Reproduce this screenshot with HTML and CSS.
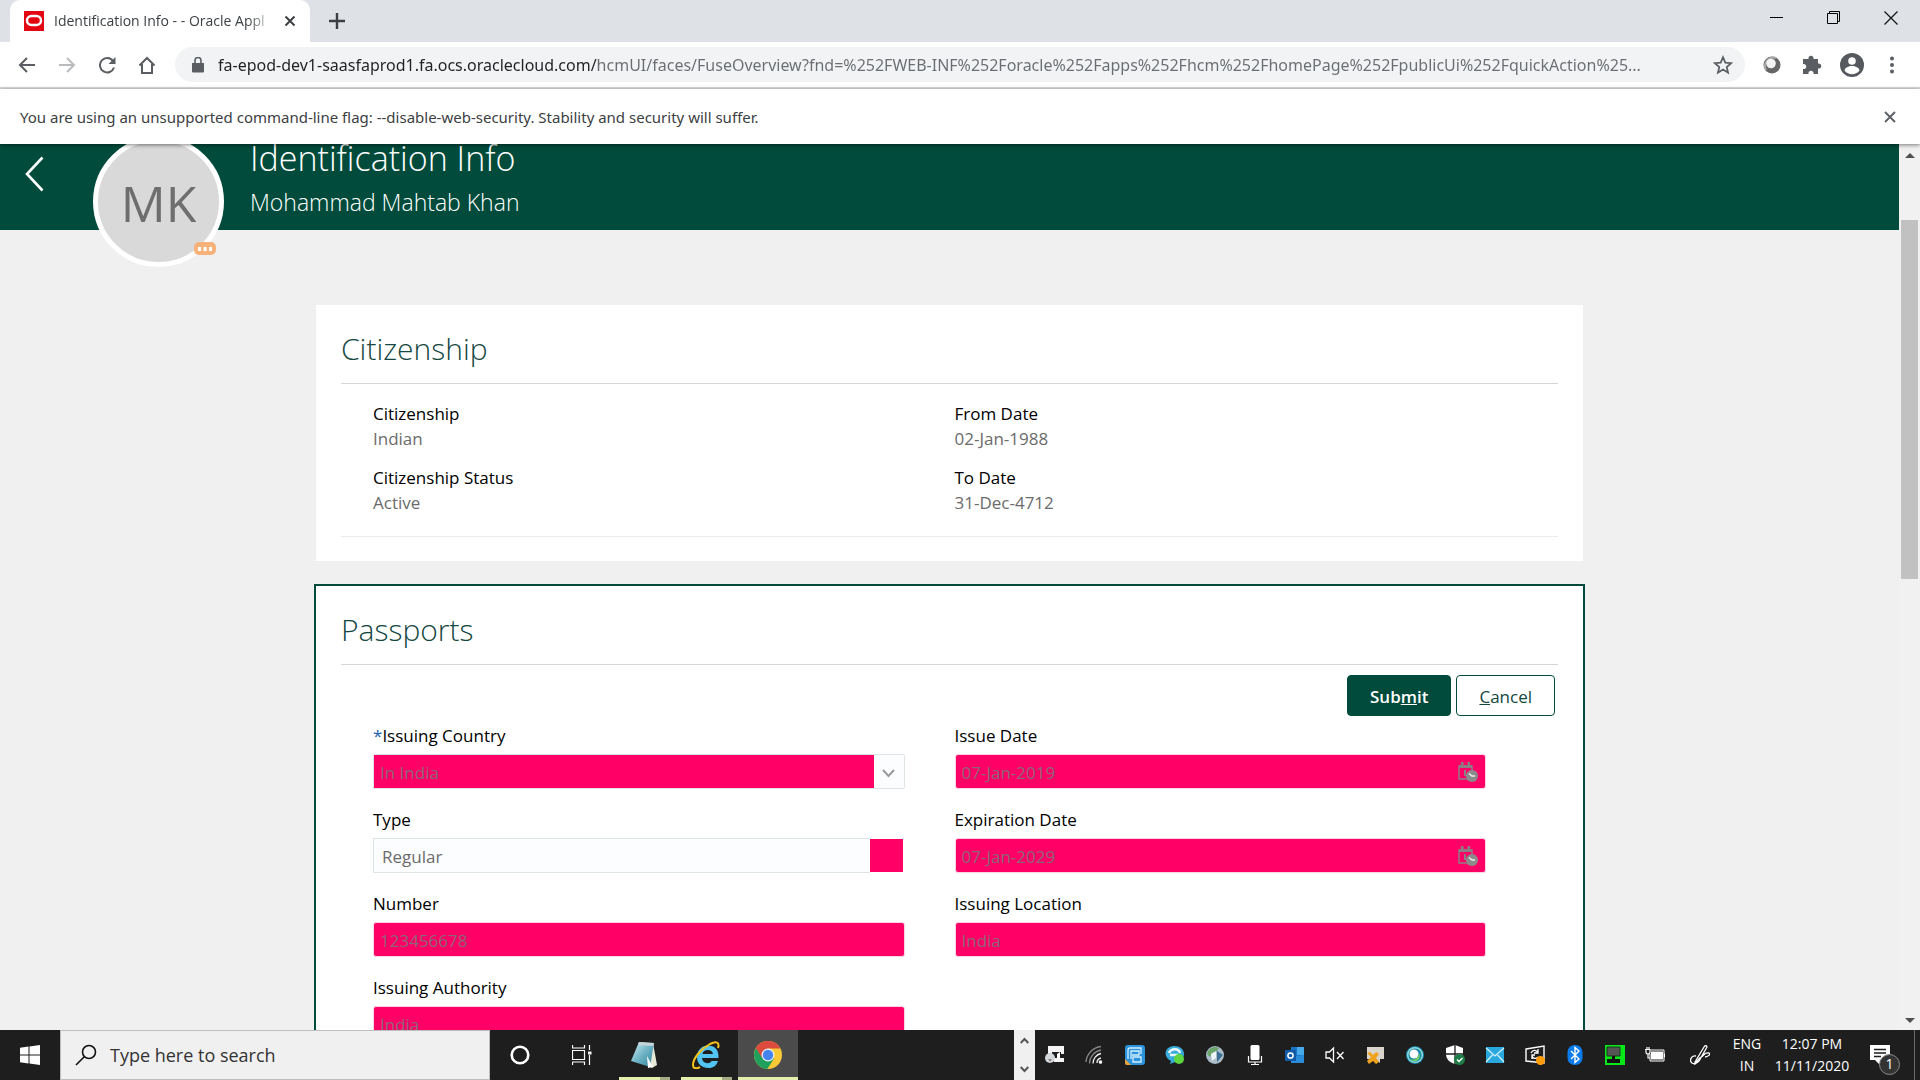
FILE: index.html
```html
<!DOCTYPE html>
<html lang="en">
<head>
<meta charset="utf-8">
<title>Identification Info - - Oracle Applications</title>
<link rel="stylesheet" href="styles.css">
</head>
<body>
<div class="tabstrip">
  <div class="tab">
    <svg class="favicon" width="20" height="20" viewBox="0 0 20 20"><path fill="#e30613" d="M0 0h20v20H0z"/><rect x="3" y="5" width="14" height="9" rx="4.500" fill="none" stroke="#fff" stroke-width="2.500"/></svg>
    <span class="tab-title">Identification Info - - Oracle Appl</span>
    <button class="bare" aria-label="Close tab"><svg width="12" height="12" viewBox="0 0 12 12"><path d="M1.500 1.500l9 9m0-9l-9 9" stroke="#3c4043" stroke-width="2"/></svg></button>
  </div>
  <button class="bare new-tab" aria-label="New tab"><svg width="16" height="16" viewBox="0 0 16 16"><path d="M8 0v16M0 8h16" stroke="#3c4043" stroke-width="2.400"/></svg></button>
  <div class="window-controls">
    <button class="bare" aria-label="Minimize"><svg width="14" height="14" viewBox="0 0 14 14"><path d="M0 6.500h13" stroke="#000"/></svg></button>
    <button class="bare" aria-label="Restore"><svg width="14" height="14" viewBox="0 0 14 14"><path d="M.5 2.500h10v10H.5zM2.500 2.500v-2h10v10h-2" fill="none" stroke="#000"/></svg></button>
    <button class="bare" aria-label="Close"><svg width="14" height="14" viewBox="0 0 14 14"><path d="M.5.5l13 13m0-13l-13 13" stroke="#111" stroke-width="1.200"/></svg></button>
  </div>
</div>

<div class="toolbar">
  <div class="nav">
    <button class="bare" aria-label="Back"><svg width="18" height="18" viewBox="0 0 18 18"><path d="M17 9H2m7-7L2 9l7 7" fill="none" stroke="#5a5d61" stroke-width="2"/></svg></button>
    <button class="bare" aria-label="Forward"><svg width="18" height="18" viewBox="0 0 18 18"><path d="M1 9h15M9 2l7 7-7 7" fill="none" stroke="#b9bbbd" stroke-width="2"/></svg></button>
    <button class="bare" aria-label="Reload"><svg width="18" height="18" viewBox="0 0 18 18"><path d="M15 5A7.200 7.200 0 1 0 16 11.500" fill="none" stroke="#5a5d61" stroke-width="2"/><path d="M17.500 1v7h-7z" fill="#5a5d61"/></svg></button>
    <button class="bare" aria-label="Home"><svg width="18" height="18" viewBox="0 0 18 18"><path d="M1.500 9.500L9 2l7.500 7.500M4 8v9h10V8" fill="none" stroke="#5a5d61" stroke-width="2"/></svg></button>
  </div>
  <div class="omnibox">
    <svg width="12" height="16" viewBox="0 0 12 16"><path d="M0 6h12v8.500a1 1 0 0 1-1 1H1a1 1 0 0 1-1-1z" fill="#5a5d61"/><path d="M3 6V3.500a3 3 0 0 1 6 0V6" fill="none" stroke="#5a5d61" stroke-width="1.600"/></svg>
    <input class="url" aria-label="Address" value="fa-epod-dev1-saasfaprod1.fa.ocs.oraclecloud.com/hcmUI/faces/FuseOverview?fnd=%252FWEB-INF%252Foracle%252Fapps%252Fhcm%252FhomePage%252FpublicUi%252FquickAction%25...">
    <button class="bare" aria-label="Bookmark"><svg width="20" height="20" viewBox="0 0 20 20"><path d="M10 2.200l2.300 5.400 5.900.5-4.500 3.900 1.400 5.700-5.100-3.100-5.100 3.100 1.400-5.700L1.800 8.100l5.900-.5z" fill="none" stroke="#5a5d61" stroke-width="1.700"/></svg></button>
  </div>
  <div class="extensions">
    <button class="bare" aria-label="Extension"><svg width="18" height="18" viewBox="0 0 18 18"><circle cx="9" cy="9" r="8.500" fill="#666"/><path d="M3 14A8.500 8.500 0 0 1 13 2" fill="none" stroke="#aaa" stroke-width="2"/><circle cx="8" cy="7.500" r="4.800" fill="#f2f2f2"/></svg></button>
    <button class="bare" aria-label="Extensions"><svg width="20" height="20" viewBox="0 0 20 20"><path d="M1 4h5.500a2.600 2.600 0 1 1 5 0H16v4.500a2.600 2.600 0 1 1 0 5V19h-4.500a2.600 2.600 0 1 0-5 0H1v-5a2.600 2.600 0 1 0 0-5z" fill="#5a5d61"/></svg></button>
    <button class="bare" aria-label="Profile"><svg width="24" height="24" viewBox="0 0 24 24"><circle cx="12" cy="12" r="12" fill="#56595e"/><circle cx="12" cy="8" r="3.800" fill="#fff"/><path d="M4.500 17.500c1-6 14-6 15 0-4 5-11 5-15 0z" fill="#fff"/></svg></button>
    <button class="bare" aria-label="Menu"><svg width="6" height="18" viewBox="0 0 6 18" fill="#5a5d61"><circle cx="3" cy="2.500" r="2"/><circle cx="3" cy="9" r="2"/><circle cx="3" cy="15.500" r="2"/></svg></button>
  </div>
</div>

<div class="infobar">
  <span>You are using an unsupported command-line flag: --disable-web-security. Stability and security will suffer.</span>
  <button class="bare" aria-label="Dismiss"><svg width="12" height="12" viewBox="0 0 12 12"><path d="M1 1l10 10m0-10L1 11" stroke="#5f6368" stroke-width="2"/></svg></button>
</div>

<div class="viewport">
  <main class="page">
    <header class="hero">
      <button class="bare back" aria-label="Go back"><svg width="20" height="36" viewBox="0 0 20 36"><path d="M17.500 1.500L2 18l15.500 16.500" fill="none" stroke="#fff" stroke-width="2.600"/></svg></button>
      <div class="avatar">MK<span class="avatar-badge"><svg width="14" height="4" viewBox="0 0 14 4" fill="#fff"><path d="M0 0h3v4H0zM5.500 0h3v4h-3zM11 0h3v4h-3z"/></svg></span></div>
      <div class="hero-text">
        <h1>Identification Info</h1>
        <p>Mohammad Mahtab Khan</p>
      </div>
    </header>

    <div class="cards">
      <section class="card">
        <h2>Citizenship</h2>
        <dl class="facts">
          <div><dt>Citizenship</dt><dd>Indian</dd></div>
          <div><dt>From Date</dt><dd>02-Jan-1988</dd></div>
          <div><dt>Citizenship Status</dt><dd>Active</dd></div>
          <div><dt>To Date</dt><dd>31-Dec-4712</dd></div>
        </dl>
      </section>

      <section class="card card-active">
        <h2>Passports</h2>
        <form>
          <div class="actions">
            <button class="btn btn-primary" type="button"><span>Sub<u>m</u>it</span></button>
            <button class="btn" type="button"><span><u>C</u>ancel</span></button>
          </div>
          <div class="fields">
            <div class="field">
              <label for="country"><span class="required">*</span>Issuing Country</label>
              <div class="control control-lov"><input id="country" value="In India"><button class="bare" type="button" aria-label="Show list"><svg width="13" height="9" viewBox="0 0 13 9"><path d="M1 1l5.500 6L12 1" fill="none" stroke="#9a9a9a" stroke-width="2"/></svg></button></div>
            </div>
            <div class="field">
              <label for="issued">Issue Date</label>
              <div class="control control-pink"><input id="issued" value="07-Jan-2019"><button class="bare" type="button" aria-label="Select date"><svg width="20" height="20" viewBox="0 0 20 20"><path d="M1 4h13v13H1z" fill="none" stroke="#8d7d85" stroke-width="1.500"/><path d="M1 3h13v3H1zM3 0h2.500v4H3zM9.500 0H12v4H9.500zM6 8h2v6H6z" fill="#8d7d85"/><circle cx="14" cy="14" r="6" fill="#8b8b8b"/><path d="M11 11.500l3 2.500h3" fill="none" stroke="#eee" stroke-width="1.600"/></svg></button></div>
            </div>
            <div class="field">
              <label for="type">Type</label>
              <div class="control control-select"><select id="type"><option>Regular</option></select><span class="swatch"></span></div>
            </div>
            <div class="field">
              <label for="expires">Expiration Date</label>
              <div class="control control-pink"><input id="expires" value="07-Jan-2029"><button class="bare" type="button" aria-label="Select date"><svg width="20" height="20" viewBox="0 0 20 20"><path d="M1 4h13v13H1z" fill="none" stroke="#8d7d85" stroke-width="1.500"/><path d="M1 3h13v3H1zM3 0h2.500v4H3zM9.500 0H12v4H9.500zM6 8h2v6H6z" fill="#8d7d85"/><circle cx="14" cy="14" r="6" fill="#8b8b8b"/><path d="M11 11.500l3 2.500h3" fill="none" stroke="#eee" stroke-width="1.600"/></svg></button></div>
            </div>
            <div class="field">
              <label for="number">Number</label>
              <div class="control control-pink"><input id="number" value="123456678"></div>
            </div>
            <div class="field">
              <label for="location">Issuing Location</label>
              <div class="control control-pink"><input id="location" value="India"></div>
            </div>
            <div class="field">
              <label for="authority">Issuing Authority</label>
              <div class="control control-pink"><input id="authority" value="India"></div>
            </div>
          </div>
        </form>
      </section>
    </div>
  </main>
  <div class="scrollbar">
    <svg width="10" height="5" viewBox="0 0 10 5"><path d="M0 5l5-5 5 5z" fill="#505050"/></svg>
    <div class="track"><div class="thumb"></div></div>
    <svg width="10" height="5" viewBox="0 0 10 5"><path d="M0 0l5 5 5-5z" fill="#505050"/></svg>
  </div>
</div>

<footer class="taskbar">
  <button class="bare start" aria-label="Start"><svg width="20" height="20" viewBox="0 0 20 20" fill="#fff"><path d="M0 2.800l8.500-1.200v8H0zM9.500 1.400L20 0v9.600H9.500zM0 10.400h8.500v8L0 17.200zM9.500 10.400H20V20L9.500 18.600z"/></svg></button>
  <label class="search">
    <svg width="22" height="22" viewBox="0 0 22 22"><circle cx="14" cy="8" r="6.500" fill="none" stroke="#111" stroke-width="1.600"/><path d="M9.500 12.500L1 21" stroke="#111" stroke-width="1.600"/></svg>
    <input placeholder="Type here to search" aria-label="Search">
  </label>
  <div class="apps">
    <button class="bare app" aria-label="Cortana"><svg width="20" height="20" viewBox="0 0 20 20"><circle cx="10" cy="10" r="8.300" fill="none" stroke="#fff" stroke-width="2.600"/></svg></button>
    <button class="bare app" aria-label="Task view"><svg width="20" height="20" viewBox="0 0 20 20"><path d="M.5 5.500h12v9H.5zM.5 0v3h12V0M.5 20v-3h12v3M17.500 0v5M17.500 10v10" fill="none" stroke="#fff" stroke-width="1.200"/><path d="M16 6.500h3.500v3H16z" fill="#fff"/></svg></button>
    <button class="bare app stacked" aria-label="Notepad"><svg width="28" height="28" viewBox="0 0 28 28"><defs><linearGradient id="pad" x1="0" x2="1" y1="0" y2="1"><stop offset="0" stop-color="#d8f0f4"/><stop offset=".5" stop-color="#6fb4c6"/><stop offset="1" stop-color="#2f7f98"/></linearGradient></defs><path d="M23 2l4 22-5 3-4-3z" fill="#e6e8d8"/><path d="M9 1l15 1-4 24L1 20z" fill="url(#pad)"/><path d="M9 1l15 1-.5 3L8 4z" fill="#c8d4d8"/><path d="M17 15l6 11-5 1z" fill="#fff"/></svg></button>
    <button class="bare app stacked" aria-label="Internet Explorer"><svg width="28" height="28" viewBox="0 0 28 28"><path d="M10 17h16.500C27 8 22 4.500 16 4.500S5 9 5 16s5 11 11.500 11c5 0 8-2.500 9.500-7h-6.500C18 23.500 10.500 23 10 17zM10.500 13c.5-5.500 10-5.500 10.500 0z" fill="#51c4f2" fill-rule="evenodd"/><path d="M26 7c2-6-2-7-8-4C9 8 1 17 1 24c0 4 4 4 7 2" fill="none" stroke="#f6c21c" stroke-width="2"/></svg></button>
    <button class="bare app current" aria-label="Chrome"><svg width="28" height="28" viewBox="0 0 28 28"><circle cx="14" cy="14" r="14" fill="#fbc935"/><path d="M1.900 7A14 14 0 0 0 13.300 28L20 17.500 14 14z" fill="#1fa05d"/><path d="M1.900 7A14 14 0 0 1 26.500 7.500H14L8 17z" fill="#dd4b3e"/><circle cx="14" cy="14" r="6.500" fill="#eef1f5"/><circle cx="14" cy="14" r="5.200" fill="#4584ee"/></svg></button>
  </div>
  <div class="band-scroll">
    <svg width="9" height="7" viewBox="0 0 9 7"><path d="M.7 6l3.800-4L8.300 6" fill="none" stroke="#555" stroke-width="2"/></svg>
    <svg width="9" height="7" viewBox="0 0 9 7"><path d="M.7 1l3.800 4L8.300 1" fill="none" stroke="#555" stroke-width="2"/></svg>
  </div>
  <div class="tray">
    <svg width="20" height="20" viewBox="0 0 20 20"><path d="M3 1h16v6H3zM9 13h10v4H9z" fill="#f4f4f4"/><path d="M3 7h4v3H3zM16 7h3v2h-3z" fill="#f4f4f4"/><path d="M12 9l3-2v6h-3z" fill="#fff"/><circle cx="5" cy="13" r="5" fill="#d5d8da"/><path d="M3 14l2 3 2-3z" fill="#888"/></svg>
    <svg width="20" height="20" viewBox="0 0 20 20" fill="none" stroke="#eee" stroke-width="1.300"><path d="M12 18a5 5 0 0 1 4-5M8 18.500a10 10 0 0 1 8-10"/><path d="M4.500 18.500A14 14 0 0 1 16 5M1 17A17 17 0 0 1 16 1.500" stroke="#888"/><circle cx="15.500" cy="17" r="1.200" fill="#fff"/></svg>
    <svg width="20" height="20" viewBox="0 0 20 20"><rect width="20" height="20" rx="3" fill="#2b93dc"/><path d="M3 14V5q0-2 2-2h11v6M6 14V6h8v4H7M8 17h8v-5H8z" fill="none" stroke="#d4efff" stroke-width="1.300"/><path d="M0 14l6 6H2q-2 0-2-2z" fill="#e8a33a"/></svg>
    <svg width="20" height="20" viewBox="0 0 20 20"><path d="M9 1c6 0 10 3 10 8s-4 8-9 8l-5 2 1-3C-3 12 0 1 9 1z" fill="#38acd8"/><path d="M4 8c2-5 10-5 11 0M5 10h8" fill="none" stroke="#e9f8ff" stroke-width="2.500"/><circle cx="14" cy="14" r="5" fill="#5ed640"/></svg>
    <svg width="20" height="20" viewBox="0 0 20 20"><circle cx="10" cy="10" r="9" fill="#a9bcc8"/><path d="M2 9c2-7 8-8 12-6l-3 4-4 1-2 4z" fill="#6ba368"/><path d="M12 6l6 4-6 7z" fill="#3d6f94"/><path d="M6 9l5-3v7l-4 3z" fill="#eef4f7"/></svg>
    <svg width="20" height="20" viewBox="0 0 20 20"><rect x="5.500" y="0" width="9" height="15" rx="1.500" fill="#fff"/><path d="M3.500 11v6h13v-6M10 17v3M6 19.500h8" fill="none" stroke="#fff" stroke-width="1.200"/></svg>
    <svg width="20" height="20" viewBox="0 0 20 20"><path d="M6 2h13v16H6z" fill="#1a74c4"/><path d="M12 2h7v8h-7z" fill="#45a9ea"/><path d="M6 12l13-2v8H6z" fill="#2a8bd8"/><path d="M0 5h11v11H0z" fill="#0f5ba7"/><circle cx="5.500" cy="10.500" r="2.600" fill="none" stroke="#fff" stroke-width="1.500"/></svg>
    <svg width="20" height="20" viewBox="0 0 20 20"><path d="M1 7h3.500l4-4v14l-4-4H1zM12 7l6.500 7m0-7L12 14" fill="none" stroke="#fff" stroke-width="1.300"/></svg>
    <svg width="20" height="20" viewBox="0 0 20 20"><path d="M2 2h17v12h-4v4l-4-4H2z" fill="#d9d4cc"/><path d="M2 8l3-1 3 3 3-3 3 2-3 4 3 4-3 2-3-3-4 3-2-3 4-4z" fill="#efa31d"/></svg>
    <svg width="20" height="20" viewBox="0 0 20 20"><circle cx="10" cy="10" r="9" fill="#168ba5"/><circle cx="10" cy="10" r="7.300" fill="none" stroke="#8fd3de" stroke-width="1.500"/><circle cx="9" cy="9" r="4.500" fill="#fff"/><path d="M5 14c5 2 9-1 9-6 3 6-4 11-9 6z" fill="#7ed957"/></svg>
    <svg width="20" height="20" viewBox="0 0 20 20"><path d="M10 0l8 3v6c0 6-5 9-8 10-4-1-9-4-9-10V3z" fill="#fff"/><path d="M10 0v19M1 9h17" stroke="#1e1e1e" stroke-width="1.300"/><circle cx="14.500" cy="14.500" r="5.500" fill="#1e7d47"/><path d="M12 14.500l2 2 3.500-3.500" fill="none" stroke="#fff" stroke-width="1.400"/></svg>
    <svg width="20" height="20" viewBox="0 0 20 20"><path d="M1 2h18v16H1z" fill="#28a8dc"/><path d="M1 3l9 8 9-8M1 17l6.500-7M19 17l-6.500-7" fill="none" stroke="#d5f1fc" stroke-width="1.200"/></svg>
    <svg width="20" height="20" viewBox="0 0 20 20"><path d="M1 4l18-3v17L1 16z" fill="none" stroke="#fff" stroke-width="1.400"/><path d="M6 8c2-4 6-3 7 0M13 4v4H9M7 14v-4h3M7 11c1 3 4 3 6 1" fill="none" stroke="#fff" stroke-width="1.300"/><circle cx="15.500" cy="15.500" r="4.500" fill="#ff9d0a"/></svg>
    <svg width="20" height="20" viewBox="0 0 20 20"><rect x="2.500" width="15" height="20" rx="7" fill="#0a7be8"/><path d="M6 6l8 8-4 3.500v-15L14 6l-8 8" fill="none" stroke="#fff" stroke-width="1.400"/></svg>
    <svg width="20" height="20" viewBox="0 0 20 20"><path d="M0 0h20v20H0z" fill="#07e818"/><path d="M2 2h13v9H2z" fill="#555"/><path d="M2 2h13v9H2z" fill="none" stroke="#173d1b"/><path d="M7 11h3v3h5v4H2v-4h5z" fill="#111"/></svg>
    <svg width="20" height="20" viewBox="0 0 20 20"><path d="M6 6.500h12v8H6z" fill="#fff"/><path d="M5 5h14v11H5zM19.500 8.500v4" fill="none" stroke="#fff" stroke-width="1"/><path d="M0 4h6v5H4v4H2V9H0z" fill="#1e1e1e"/><path d="M0 4.500h5M1 4v3q0 2 2 2t2-2V4M3 9v4h2M2 4V2M4 4V2" fill="none" stroke="#fff" stroke-width="1.200"/></svg>
    <svg class="pen" width="20" height="20" viewBox="0 0 20 20"><path d="M5 17L14 2q2-3 3 0L9 16l-4 3zM6 11c-5-1-7 5-4 7 4 3 6-5 9-6s3-5 8-4c2 1-1 4-4 4" fill="none" stroke="#fff" stroke-width="1.300"/></svg>
    <div class="tray-text lang"><span>ENG</span><span>IN</span></div>
    <div class="tray-text clock"><span>12:07 PM</span><span>11/11/2020</span></div>
    <button class="bare notify" aria-label="Notifications"><svg width="20" height="20" viewBox="0 0 20 20"><path d="M0 0h20v15H10v5l-5-5H0z" fill="#fff"/><path d="M4 4.500h12M4 8h12M4 11.500h7" stroke="#1e1e1e" stroke-width="1.300"/></svg><span class="count">1</span></button>
    <span class="peek"></span>
  </div>
</footer>
</body>
</html>
```

FILE: styles.css
```css
* { box-sizing: border-box; }

body {
  margin: 0;
  height: 100vh;
  display: flex;
  flex-direction: column;
  overflow: hidden;
  font-family: "Open Sans", "Noto Sans", sans-serif;
  font-size: 17px;
  line-height: 24px;
  color: #000;
  background: #fff;
}

h1, h2, p, dl, dd { margin: 0; }
input, select, button { font: inherit; color: inherit; }
svg { display: block; flex: none; }

.bare {
  display: flex;
  align-items: center;
  justify-content: center;
  flex: none;
  padding: 0;
  border: 0;
  background: none;
}

/* Browser chrome */
.tabstrip {
  display: flex;
  align-items: center;
  flex: none;
  height: 42px;
  padding-left: 10px;
  background: #dee1e6;
}
.tab {
  display: flex;
  align-items: center;
  align-self: stretch;
  width: 300px;
  padding: 0 14px;
  gap: 10px;
  border-radius: 10px 10px 0 0;
  background: #fff;
  font-size: 14px;
  color: #3c4043;
}
.tab-title {
  flex: 1;
  overflow: hidden;
  white-space: nowrap;
  -webkit-mask-image: linear-gradient(90deg, #000 88%, transparent);
  mask-image: linear-gradient(90deg, #000 88%, transparent);
}
.new-tab { margin-left: 19px; }
.window-controls { display: flex; gap: 43px; margin-left: auto; padding-right: 22px; padding-bottom: 6px; }

.toolbar {
  display: flex;
  align-items: center;
  flex: none;
  height: 47px;
  padding: 0 16px 0 18px;
  border-bottom: 2px solid #d9dadc;
}
.nav { display: flex; gap: 22px; margin-right: 19px; }
.omnibox {
  display: flex;
  align-items: center;
  flex: 1;
  height: 35px;
  padding: 0 12px 0 17px;
  gap: 14px;
  border-radius: 18px;
  background: #f1f3f4;
}
.url {
  flex: 1;
  min-width: 0;
  padding: 0;
  border: 0;
  outline: 0;
  font-family: "Noto Sans", sans-serif;
  font-size: 16px;
  background: linear-gradient(90deg, #202124 380px, #6a6d71 380px);
  -webkit-background-clip: text;
  background-clip: text;
  color: transparent;
}
.extensions { display: flex; align-items: center; gap: 16px; margin-left: 15px; }
.extensions .bare { width: 24px; }

.infobar {
  display: flex;
  align-items: center;
  justify-content: space-between;
  flex: none;
  height: 55px;
  padding: 0 24px 0 20px;
  font-family: "Noto Sans", sans-serif;
  font-size: 15px;
  color: #3c4043;
  box-shadow: 0 1px 4px rgba(0, 0, 0, .5);
  z-index: 1;
}

/* Page */
.viewport { display: flex; flex: 1; min-height: 0; }
.page { flex: 1; overflow: hidden; background: #f0f0f0; }

.hero {
  display: flex;
  align-items: flex-start;
  height: 86px;
  background: #004b3b;
  color: #fff;
}
.back { margin: 12px 0 0 25px; }
.avatar {
  position: relative;
  flex: none;
  width: 131px;
  height: 131px;
  margin: -8px 26px 0 48px;
  border: 5px solid #fff;
  border-radius: 50%;
  background: #d9d9d9;
  color: #6e6e6e;
  font-size: 50px;
  line-height: 124px;
  text-align: center;
}
.avatar-badge {
  position: absolute;
  right: 3px;
  bottom: 7px;
  width: 22px;
  height: 13px;
  display: flex;
  align-items: center;
  justify-content: center;
  border-radius: 5px;
  background: #f7b27a;
}
.hero h1 { font-size: 34px; font-weight: 300; line-height: 28px; }
.hero p { font-size: 23px; font-weight: 300; line-height: 32px; margin-top: 14px; }

.cards {
  display: flex;
  flex-direction: column;
  gap: 21px;
  max-width: 1271px;
  margin: 0 auto;
  padding-top: 73px;
}
.card {
  padding: 22px 25px 24px;
  border: 2px solid transparent;
  background: #fff padding-box;
}
.card-active { border-color: #004b3b; }
.card h2 {
  padding-bottom: 12px;
  border-bottom: 1px solid #d6d6d6;
  font-size: 30px;
  font-weight: 300;
  line-height: 44px;
  color: #14473f;
}
.facts, .fields {
  display: grid;
  grid-template-columns: 1fr 1fr;
  column-gap: 50px;
  padding: 0 72px 0 32px;
}
.facts {
  padding-top: 18px;
  padding-bottom: 20px;
  row-gap: 14px;
  border-bottom: 1px solid #ececec;
}
dt, label { font-weight: 500; }
.facts dd { color: #6b6b6b; line-height: 26px; }

.actions { display: flex; justify-content: flex-end; gap: 5px; padding: 10px 3px 8px 0; }
.btn {
  height: 41px;
  padding: 2px 22px 0;
  border: 1px solid #004b3b;
  border-radius: 4px;
  background: #fff;
  color: #14473f;
}
.btn-primary { background: #004b3b; color: #fff; font-weight: 600; }

.field { height: 84px; }
.field label { display: block; line-height: 24px; margin-bottom: 6px; }
.required { color: #1d5fa8; }
.control { display: flex; height: 35px; }
.control input, .control select {
  flex: 1;
  min-width: 0;
  padding: 2px 6px 0;
  border: 0;
  outline: 0;
  background: none;
  color: #8c6677;
}
.control-pink { border: 1px solid #ffd3e4; border-radius: 3px; background: #ff0066; }
.control-pink .bare { padding-right: 7px; }
.control-lov { border: 1px solid #dfe4e7; border-radius: 2px; background: #fcfdfe; }
.control-lov input { background: #ff0066; }
.control-lov .bare { width: 30px; padding-top: 4px; }
.control-select select {
  appearance: none;
  padding-left: 8px;
  border: 1px solid #dfe4e7;
  border-right: 0;
  background: #fcfdfe;
  color: #6b6b6b;
}
.swatch { width: 33px; margin: 1px 2px 1px 0; background: #ff0066; }

.scrollbar {
  display: flex;
  flex-direction: column;
  align-items: center;
  width: 21px;
  padding: 9px 0 7px;
  background: #f1f1f1;
}
.track { flex: 1; width: 17px; padding-top: 62px; }
.thumb { height: 45%; background: #c1c1c1; }

/* Taskbar */
.taskbar {
  display: flex;
  flex: none;
  height: 50px;
  background: #1e1e1e;
  color: #fff;
}
.start { width: 60px; }
.search {
  display: flex;
  align-items: center;
  width: 430px;
  padding-left: 14px;
  gap: 13px;
  border: 1px solid #bdbdbd;
  background: #f0f0f0;
}
.search input { flex: 1; padding: 0; border: 0; outline: 0; background: none; font-size: 18px; color: #333; }
.search input::placeholder { color: #333; }
.apps { display: flex; gap: 2px; }
.app { width: 60px; }
.stacked { background: linear-gradient(90deg, transparent 5px, #e3efae 5px, #e3efae 46px, #a6ac86 46px, #a6ac86 56px, transparent 56px) bottom / 100% 3px no-repeat; }
.current { background: linear-gradient(#e3efae, #e3efae) bottom / 100% 3px no-repeat #4b4b4b; }
.band-scroll {
  display: flex;
  flex-direction: column;
  align-items: center;
  justify-content: space-between;
  width: 21px;
  margin-left: auto;
  padding: 7px 0;
  background: #f0f0f0;
}
.tray { display: flex; align-items: center; gap: 20px; padding-left: 10px; }
.tray .pen { margin-left: 5px; }
.tray-text { display: flex; flex-direction: column; align-items: center; font-size: 14px; line-height: 22px; }
.lang { width: 34px; }
.clock { width: 76px; margin-left: -10px; }
.notify { position: relative; }
.count {
  position: absolute;
  left: 9px;
  top: 9px;
  width: 21px;
  height: 21px;
  border: 1px solid #8b8b8b;
  border-radius: 50%;
  background: #333;
  font-size: 14px;
  line-height: 18px;
}
.peek { align-self: stretch; width: 6px; margin-left: 4px; border-left: 1px solid #6b6b6b; }
```
